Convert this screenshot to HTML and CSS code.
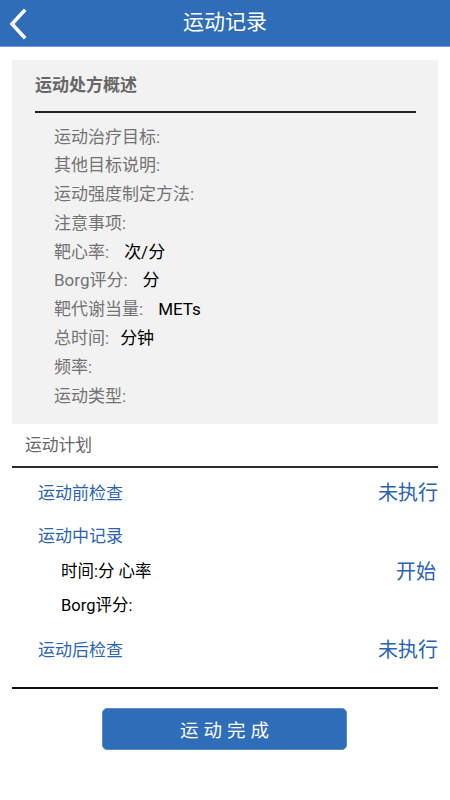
FILE: index.html
```html
<!DOCTYPE html>
<html lang="zh">
<head>
<meta charset="utf-8">
<title>运动记录</title>
<link rel="stylesheet" href="styles.css">
</head>
<body>
<header class="topbar">
  <svg class="back" width="22" height="32" viewBox="0 0 22 32"><path d="M17 3 L5 16 L17 29" fill="none" stroke="#fff" stroke-width="3.6" stroke-linecap="square"/></svg>
  <h1 class="title">运动记录</h1>
</header>
<main class="content">
  <section class="panel">
    <h2 class="panel-head">运动处方概述</h2>
    <div class="rule-thin"></div>
    <ul class="items">
      <li>运动治疗目标:</li>
      <li>其他目标说明:</li>
      <li>运动强度制定方法:</li>
      <li>注意事项:</li>
      <li>靶心率:<span class="val">次/分</span></li>
      <li>Borg评分:<span class="val">分</span></li>
      <li>靶代谢当量:<span class="val">METs</span></li>
      <li>总时间:<span class="val val-tight">分钟</span></li>
      <li>频率:</li>
      <li>运动类型:</li>
    </ul>
  </section>
  <div class="plan-head">运动计划</div>
  <div class="rule"></div>
  <section class="plan">
    <div class="row">
      <span class="link">运动前检查</span>
      <span class="status">未执行</span>
    </div>
    <div class="block">
      <div class="row">
        <span class="link">运动中记录</span>
      </div>
      <div class="sub">
        <span>时间:分 心率</span>
        <span class="status status-start">开始</span>
      </div>
      <div class="sub">
        <span>Borg评分:</span>
      </div>
    </div>
    <div class="row">
      <span class="link">运动后检查</span>
      <span class="status">未执行</span>
    </div>
  </section>
  <div class="rule rule-bottom"></div>
  <div class="actions">
    <button class="done">运动完成</button>
  </div>
</main>
</body>
</html>
```
FILE: styles.css
```css
* { box-sizing: border-box; }
body {
  margin: 0;
  background: #fff;
  font-family: Roboto, "Noto Sans CJK SC", sans-serif;
  color: #000;
}
.topbar {
  height: 47px;
  background: #2f6db9;
  border-bottom: 1px solid #6f9bd5;
  display: flex;
  align-items: center;
  justify-content: center;
  position: relative;
}
.back {
  position: absolute;
  left: 7px;
  top: 8px;
}
.title {
  margin: 0;
  font-size: 21px;
  font-weight: normal;
  color: #fff;
  line-height: 1;
  padding-bottom: 2px;
}
.content {
  padding: 0 12px;
}
.panel {
  margin-top: 13px;
  background: #f2f2f2;
  padding: 13px 22px 14px 23px;
}
.panel-head {
  margin: 0;
  font-size: 17px;
  font-weight: bold;
  color: #666;
  line-height: 24px;
}
.rule-thin {
  margin-top: 14px;
  height: 1.5px;
  background: #222;
}
.items {
  list-style: none;
  margin: 10px 0 0;
  padding: 0 0 0 19px;
}
.items li {
  font-size: 17px;
  line-height: 28.8px;
  color: #737373;
}
.val {
  color: #000;
  margin-left: 15px;
}
.val-tight { margin-left: 11px; }
.plan-head {
  margin-top: 9px;
  padding-left: 13px;
  font-size: 16.8px;
  line-height: 24px;
  color: #666;
}
.rule {
  margin-top: 9px;
  height: 2px;
  background: #2a2a2a;
}
.plan {
  padding: 7px 0 0 26px;
  display: flex;
  flex-direction: column;
  gap: 11px;
}
.row {
  height: 32px;
  display: flex;
  align-items: center;
  justify-content: space-between;
}
.link {
  color: #2b64b3;
  font-size: 17px;
}
.status {
  color: #2b64b3;
  font-size: 20px;
}
.sub {
  height: 34px;
  display: flex;
  align-items: center;
  justify-content: space-between;
  padding-left: 23px;
  font-size: 16.5px;
  color: #000;
}
.block .row + .sub { margin-top: 3px; }
.status-start { margin-right: 2px; }
.rule-bottom {
  margin-top: 23px;
  background: #111;
}
.actions {
  display: flex;
  justify-content: center;
  margin-top: 19px;
}
.done {
  width: 245px;
  height: 42px;
  margin-left: -1px;
  background: #2f6db9;
  border: 1px solid #5a8ccc;
  border-radius: 5px;
  color: #fff;
  font-family: Roboto, "Noto Sans CJK SC", sans-serif;
  font-size: 18.5px;
  letter-spacing: 5px;
  padding: 0 0 0 5px;
}
```
